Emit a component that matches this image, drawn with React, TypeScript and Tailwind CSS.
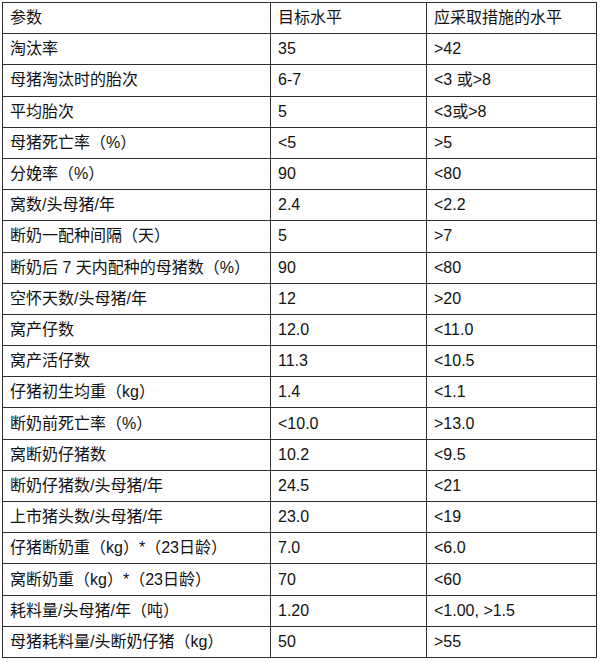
const rows: [string, string, string][] = [
  ['参数', '目标水平', '应采取措施的水平'],
  ['淘汰率', '35', '>42'],
  ['母猪淘汰时的胎次', '6-7', '<3 或>8'],
  ['平均胎次', '5', '<3或>8'],
  ['母猪死亡率（%）', '<5', '>5'],
  ['分娩率（%）', '90', '<80'],
  ['窝数/头母猪/年', '2.4', '<2.2'],
  ['断奶一配种间隔（天）', '5', '>7'],
  ['断奶后 7 天内配种的母猪数（%）', '90', '<80'],
  ['空怀天数/头母猪/年', '12', '>20'],
  ['窝产仔数', '12.0', '<11.0'],
  ['窝产活仔数', '11.3', '<10.5'],
  ['仔猪初生均重（kg）', '1.4', '<1.1'],
  ['断奶前死亡率（%）', '<10.0', '>13.0'],
  ['窝断奶仔猪数', '10.2', '<9.5'],
  ['断奶仔猪数/头母猪/年', '24.5', '<21'],
  ['上市猪头数/头母猪/年', '23.0', '<19'],
  ['仔猪断奶重（kg）*（23日龄）', '7.0', '<6.0'],
  ['窝断奶重（kg）*（23日龄）', '70', '<60'],
  ['耗料量/头母猪/年（吨）', '1.20', '<1.00, >1.5'],
  ['母猪耗料量/头断奶仔猪（kg）', '50', '>55'],
]

const App = () => {
  return (
    <div className="w-[600px] h-[662px] bg-white pt-[2px] pl-[2px]">
      <div
        className="grid grid-cols-[267px_155px_169px] grid-rows-[repeat(21,minmax(0,1fr))] gap-[1px] p-[1px] bg-[#2e2e2e] w-[595px] h-[656px] text-[16px] text-[#111]"
        style={{ fontFamily: '"Liberation Sans", "Noto Sans CJK SC", sans-serif' }}
      >
        {rows.map((row, i) =>
          row.map((cell, j) => (
            <div key={`${i}-${j}`} className="bg-white flex items-center pl-[7px] whitespace-nowrap">
              {cell}
            </div>
          ))
        )}
      </div>
    </div>
  )
}

export default App
